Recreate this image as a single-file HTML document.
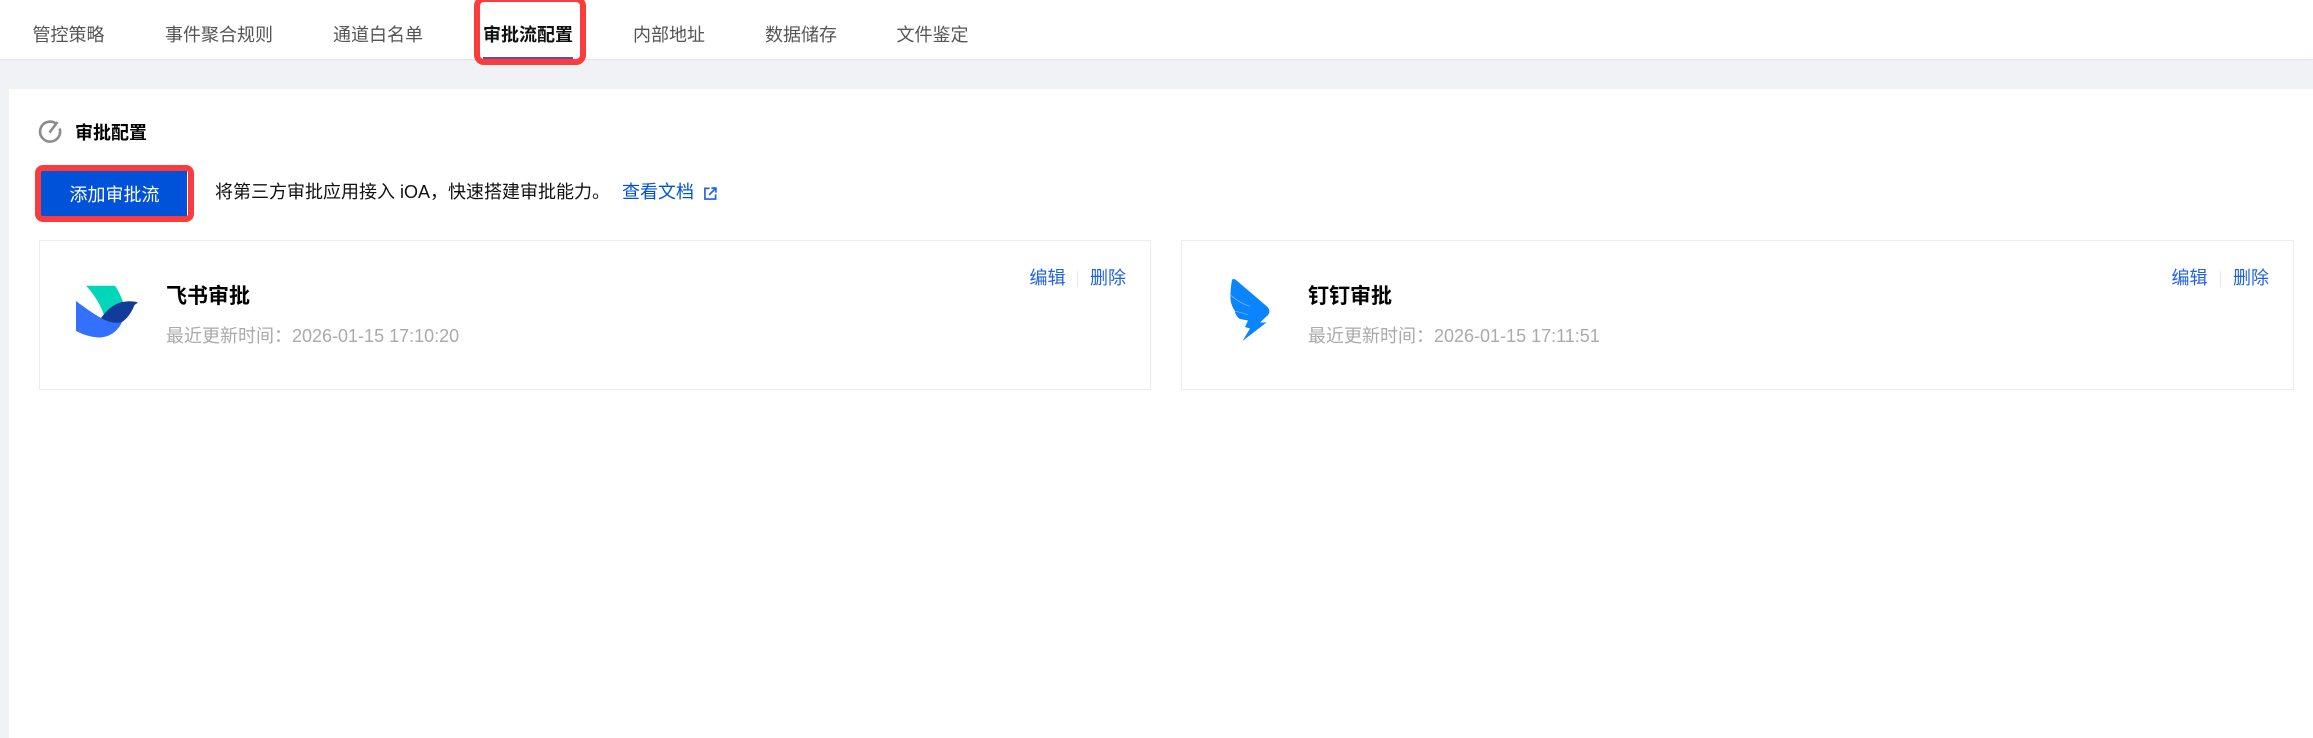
<!DOCTYPE html>
<html lang="zh">
<head>
<meta charset="utf-8">
<title>审批配置</title>
<style>
html,body{margin:0;padding:0;width:2313px;height:738px;overflow:hidden;background:#f1f2f6;}
body{position:relative;font-family:"Liberation Sans","Noto Sans CJK SC",sans-serif;font-size:18px;color:#000;}
.t{position:absolute;white-space:nowrap;line-height:26px;height:26px;}
.bar{position:absolute;left:0;top:0;width:2313px;height:59px;background:#fff;box-shadow:0 1px 2px rgba(0,0,0,.06);}
.main{position:absolute;left:9px;top:89px;width:2304px;height:649px;background:#fff;}
.tab{color:#555;top:22px;}
.red{position:absolute;box-sizing:border-box;border:6px solid #fb3c3c;border-radius:8px;}
.card{position:absolute;box-sizing:border-box;top:240px;height:150px;background:#fff;border:1.5px solid #ececec;}
.blue{color:#1f62e6;}
.time{color:#aaa;top:323px;}
.name{font-size:21px;font-weight:700;top:284px;}
.div{position:absolute;top:271px;width:1px;height:16px;background:#e8e8e8;}
svg{position:absolute;overflow:visible;}
</style>
</head>
<body>
<div class="bar"></div>
<div class="main"></div>

<span class="t tab" style="left:32.500px">管控策略</span>
<span class="t tab" style="left:165px">事件聚合规则</span>
<span class="t tab" style="left:333px">通道白名单</span>
<span class="t" style="left:483px;top:22px;font-weight:700;color:#111">审批流配置</span>
<span class="t tab" style="left:633px">内部地址</span>
<span class="t tab" style="left:765px">数据储存</span>
<span class="t tab" style="left:896.500px">文件鉴定</span>
<div style="position:absolute;left:483px;top:57px;width:90px;height:2px;background:#6a4aa8"></div>
<div class="red" style="left:474px;top:-4px;width:112px;height:69px;border-radius:10px"></div>

<svg style="left:37px;top:118px" width="26" height="26" viewBox="0 0 26 26">
  <path d="M18.500 5.200A10 10 0 1 0 22.600 10.500" fill="none" stroke="#8c8c8c" stroke-width="2.600"/>
  <path d="M12.500 14.500L20.500 4" fill="none" stroke="#8c8c8c" stroke-width="2.600"/>
</svg>
<span class="t" style="left:75px;top:120px;font-weight:700">审批配置</span>

<div style="position:absolute;left:41px;top:171px;width:146px;height:45px;background:#0052d9"></div>
<div class="red" style="left:34.500px;top:165px;width:159px;height:57px"></div>
<span class="t" style="left:69.500px;top:182px;color:#fff">添加审批流</span>
<span class="t" style="left:215px;top:179px;color:#111">将第三方审批应用接入 iOA，快速搭建审批能力。</span>
<span class="t" style="left:622px;top:179px;color:#0052d9">查看文档</span>
<svg style="left:704px;top:187px" width="13" height="13" viewBox="0 0 14 14">
  <path d="M6 1.500H1V13H12.500V8" fill="none" stroke="#1f62e6" stroke-width="1.800"/>
  <path d="M5.500 8.500L12 2M8 1.200H12.800V6" fill="none" stroke="#1f62e6" stroke-width="1.800"/>
</svg>

<div class="card" style="left:39px;width:1112px"></div>
<div class="card" style="left:1181px;width:1113px"></div>

<!-- Feishu -->
<svg style="left:60px;top:270px" width="90" height="80" viewBox="0 0 90 80">
  <path d="M26 15.700H55C58 20 61 26 63 32L60 40L45 48C41 35 34 24 26 15.700Z" fill="#00d6b9"/>
  <path d="M16 31C24 37 32 43 41 48L62 52C58 61 50 67 40 67.500C32 67.500 24 65 16 61Z" fill="#3370ff"/>
  <path d="M41 48C46 41 53 34 62 32C67 31 73 31 78 32.500L74.500 35C72 41 69 47 62 52C55 54 48 52 41 48Z" fill="#133c9a"/>
</svg>
<span class="t name" style="left:166px">飞书审批</span>
<span class="t time" style="left:166px">最近更新时间：2026-01-15 17:10:20</span>
<span class="t blue" style="left:1029.500px;top:265px">编辑</span>
<div class="div" style="left:1077px"></div>
<span class="t blue" style="left:1090px;top:265px">删除</span>

<!-- DingTalk -->
<svg style="left:1210px;top:265px" width="70" height="85" viewBox="0 0 70 85">
  <path d="M22 15C23 13.500 24.500 14 26 15L57 41.500C60 44.500 60 47.500 58 50L50 57.500H56.500L32.500 76L40 63.500L35 62L38 55.500L30 54C27 52 25 49 25 46C22 42 20 36 20.500 31C20.500 25 21 20 22 15Z" fill="#0a84ff"/>
  <path d="M21 30.500C27 36 33 39 40 41.500" fill="none" stroke="#cfe6ff" stroke-width=".6" opacity=".7"/>
  <path d="M25 46.500C29 46.500 33 48 38 50" fill="none" stroke="#cfe6ff" stroke-width=".6" opacity=".7"/>
</svg>
<span class="t name" style="left:1308px">钉钉审批</span>
<span class="t time" style="left:1308px">最近更新时间：2026-01-15 17:11:51</span>
<span class="t blue" style="left:2171.500px;top:265px">编辑</span>
<div class="div" style="left:2220px"></div>
<span class="t blue" style="left:2233px;top:265px">删除</span>
</body>
</html>
